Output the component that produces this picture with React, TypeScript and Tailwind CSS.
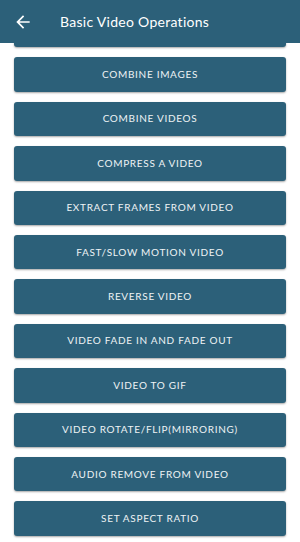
import React from "react";

const items = [
  "Combine Images",
  "Combine Videos",
  "Compress a Video",
  "Extract Frames From Video",
  "Fast/Slow Motion Video",
  "Reverse Video",
  "Video Fade In and Fade Out",
  "Video to GIF",
  "Video Rotate/Flip(Mirroring)",
  "Audio Remove From Video",
  "Set Aspect Ratio",
];

export default function App() {
  return (
    <div className="relative h-[542px] w-[300px] overflow-hidden bg-white" style={{ fontFamily: "Lato, 'Open Sans', sans-serif" }}>
      <div className="absolute left-0 top-0 z-10 flex h-[43px] w-full items-center bg-[#2c6079]">
        <svg className="ml-[13px]" width="20" height="20" viewBox="0 0 24 24" fill="#ffffff">
          <path d="M20 11H7.83l5.59-5.59L12 4l-8 8 8 8 1.41-1.41L7.83 13H20v-2z" />
        </svg>
        <span className="ml-[27px] text-[14px] tracking-[0.02em] text-white">Basic Video Operations</span>
      </div>
      <div className="flex flex-col gap-[10px] px-[14px] pt-[13px]">
        <div className="h-[34.4px] shrink-0 rounded-[3px] bg-[#2c6079] shadow-[0_1px_2px_rgba(0,0,0,0.35)]" />
        {items.map((t) => (
          <div
            key={t}
            className="flex h-[34.4px] shrink-0 items-center justify-center rounded-[3px] bg-[#2c6079] shadow-[0_1px_2px_rgba(0,0,0,0.35)]"
          >
            <span className="text-[10px] uppercase tracking-[0.07em] text-[#eef3f5]">{t}</span>
          </div>
        ))}
      </div>
    </div>
  );
}
